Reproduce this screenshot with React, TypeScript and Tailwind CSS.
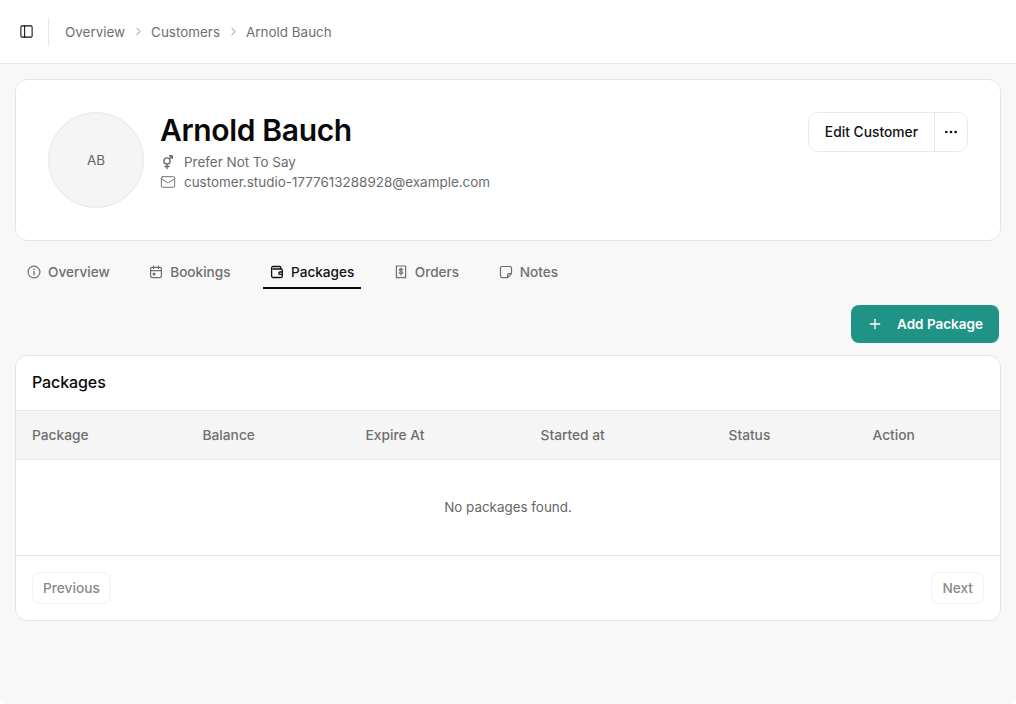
import { PanelLeft, ChevronRight, Mail, Ellipsis, Plus } from "lucide-react";

function GenderIcon() {
  return (
    <svg width="16" height="16" viewBox="0 0 16 16" fill="none" stroke="currentColor" strokeWidth="1.4" strokeLinecap="round" strokeLinejoin="round">
      <circle cx="7" cy="7" r="3.1" />
      <path d="M7 10.1v4.4M5 12.5h4M9.3 4.7 12 2M9.6 1.8h2.6v2.6" />
    </svg>
  );
}
function InfoIcon() {
  return (
    <svg width="14" height="14" viewBox="0 0 14 14" fill="none" stroke="currentColor" strokeWidth="1.2" strokeLinecap="round" strokeLinejoin="round">
      <circle cx="7" cy="7" r="5.9" />
      <path d="M7 6.6v3" strokeWidth="1.4" />
      <path d="M7 4.4h.01" strokeWidth="1.6" />
    </svg>
  );
}
function CalendarIcon() {
  return (
    <svg width="14" height="14" viewBox="0 0 14 14" fill="none" stroke="currentColor" strokeWidth="1.2" strokeLinecap="round" strokeLinejoin="round">
      <rect x="1.6" y="2.3" width="10.8" height="10.4" rx="1.4" />
      <path d="M1.6 5.6h10.8M4.6 1v2.4M9.4 1v2.4" />
      <path d="M4.3 8.3h1.5v1.5H4.3z" fill="currentColor" />
    </svg>
  );
}
function WalletIcon() {
  return (
    <svg width="14" height="14" viewBox="0 0 14 14" fill="none" stroke="currentColor" strokeWidth="1.3" strokeLinecap="round" strokeLinejoin="round">
      <path d="M10.8 4V2.8A1.3 1.3 0 0 0 9.5 1.5H3A1.4 1.4 0 0 0 1.6 2.9v8.2A1.4 1.4 0 0 0 3 12.5h8a1.3 1.3 0 0 0 1.3-1.3V5.3A1.3 1.3 0 0 0 11 4H3" />
      <path d="M12.3 7H10a1.2 1.2 0 0 0 0 2.4h2.3" />
    </svg>
  );
}
function ReceiptIcon() {
  return (
    <svg width="14" height="14" viewBox="0 0 14 14" fill="none" stroke="currentColor" strokeWidth="1.2" strokeLinecap="round" strokeLinejoin="round">
      <path d="M2.4 1h9.2v12l-1.5-.8-1.5.8-1.6-.8-1.6.8-1.5-.8-1.5.8z" />
      <path d="M8.7 4.7C8.4 4.1 7.8 3.8 7 3.8c-.9 0-1.7.4-1.7 1.2 0 1.7 3.4.8 3.4 2.5 0 .8-.8 1.2-1.7 1.2-.8 0-1.5-.3-1.8-1M7 3v7" />
    </svg>
  );
}
function NoteIcon() {
  return (
    <svg width="14" height="14" viewBox="0 0 14 14" fill="none" stroke="currentColor" strokeWidth="1.2" strokeLinecap="round" strokeLinejoin="round">
      <path d="M8.6 12.6H3A1.5 1.5 0 0 1 1.5 11.1V3A1.5 1.5 0 0 1 3 1.5h8A1.5 1.5 0 0 1 12.5 3v5.6z" />
      <path d="M8.6 12.6V9.8a1.2 1.2 0 0 1 1.2-1.2h2.7" />
    </svg>
  );
}

const tabs = [
  { label: "Overview", icon: <InfoIcon />, active: false },
  { label: "Bookings", icon: <CalendarIcon />, active: false },
  { label: "Packages", icon: <WalletIcon />, active: true },
  { label: "Orders", icon: <ReceiptIcon />, active: false },
  { label: "Notes", icon: <NoteIcon />, active: false },
];

const columns = [
  { label: "Package", w: "w-[170.5px]" },
  { label: "Balance", w: "w-[163px]" },
  { label: "Expire At", w: "w-[175px]" },
  { label: "Started at", w: "w-[188px]" },
  { label: "Status", w: "w-[144px]" },
  { label: "Action", w: "flex-1" },
];

export default function App() {
  return (
    <div className="h-[704px] w-[1016px] overflow-hidden bg-[#fdfdfd] font-['Inter',sans-serif] text-[#6b6b6b]">
      <div className="h-full rounded-b-[8px] bg-[#f8f8f8]">
        <header className="flex h-[64px] items-center border-b border-[#e8e8e8] bg-white pl-[19px]">
          <PanelLeft size={15} strokeWidth={1.7} className="text-[#111111]" />
          <div className="ml-[14px] h-7 w-px bg-[#e8e8e8]" />
          <nav className="ml-4 flex items-center pt-[1px] text-[13.45px] text-[#6f6f6f]">
            <span>Overview</span>
            <ChevronRight size={13} strokeWidth={1.5} className="mx-[6.5px]" />
            <span>Customers</span>
            <ChevronRight size={13} strokeWidth={1.5} className="mx-[6.5px]" />
            <span>Arnold Bauch</span>
          </nav>
        </header>

        <main className="flex flex-col px-[15px] pt-[15px]">
          <section className="flex h-[162px] items-start justify-between rounded-xl border border-[#e5e5e5] bg-white p-8">
            <div className="flex items-start gap-4">
              <div className="flex size-24 items-center justify-center rounded-full border border-[#e8e8e8] bg-[#f5f5f5] text-[13.5px] text-[#666666]">
                AB
              </div>
              <div className="flex flex-col">
                <h1 className="text-[30px] leading-9 font-semibold tracking-[-0.35px] text-[#0a0a0a]">Arnold Bauch</h1>
                <div className="mt-[4px] flex h-5 items-center gap-2 text-[13.45px]">
                  <GenderIcon />
                  <span>Prefer Not To Say</span>
                </div>
                <div className="flex h-5 items-center gap-2 text-[13.45px]">
                  <Mail size={16} strokeWidth={1.4} />
                  <span>customer.studio-1777613288928@example.com</span>
                </div>
              </div>
            </div>
            <div className="flex h-10 items-stretch rounded-[10px] border border-[#e8e8e8] bg-white text-[13.8px] font-medium text-[#111111]">
              <button className="px-4">Edit Customer</button>
              <button className="flex w-[33px] items-center justify-center border-l border-[#e8e8e8]">
                <Ellipsis size={16} strokeWidth={2} />
              </button>
            </div>
          </section>

          <div className="mt-4 flex h-8 items-stretch gap-[25.5px] pl-[5px] text-[13.6px] font-medium">
            {tabs.map((t) => (
              <div
                key={t.label}
                className={
                  t.active
                    ? "flex items-center gap-[7px] border-b-2 border-[#0a0a0a] px-[7px] text-[#111111]"
                    : "flex items-center gap-[7px] border-b-2 border-transparent px-[7px] text-[#6f6f6f]"
                }
              >
                {t.icon}
                <span>{t.label}</span>
              </div>
            ))}
          </div>

          <div className="mt-4 flex justify-end pr-[2px]">
            <button className="flex h-[38px] w-[148px] items-center justify-center gap-[14px] rounded-lg bg-[#1f9385] text-[13.5px] font-semibold text-white">
              <Plus size={16} strokeWidth={2} />
              <span>Add Package</span>
            </button>
          </div>

          <section className="mt-3 overflow-hidden rounded-xl border border-[#e5e5e5] bg-white">
            <h2 className="flex h-[54px] items-center px-4 pb-[2px] text-base font-medium tracking-[-0.1px] text-[#0a0a0a]">Packages</h2>
            <div className="flex h-[50px] items-center border-y border-[#e8e8e8] bg-[#f5f5f5] pl-4 text-[13.75px] font-medium text-[#6f6f6f]">
              {columns.map((c) => (
                <div key={c.label} className={c.w}>{c.label}</div>
              ))}
            </div>
            <div className="flex h-24 items-center justify-center border-b border-[#e8e8e8] pb-[1px] text-[13.4px] text-[#666666]">
              No packages found.
            </div>
            <div className="flex h-[64px] items-center justify-between px-4 text-[13.7px] font-medium text-[#8a8a8a]">
              <button className="flex h-8 items-center rounded-lg border border-[#f2f2f2] px-[10px]">Previous</button>
              <button className="flex h-8 items-center rounded-lg border border-[#f2f2f2] px-[10px]">Next</button>
            </div>
          </section>
        </main>
      </div>
    </div>
  );
}
